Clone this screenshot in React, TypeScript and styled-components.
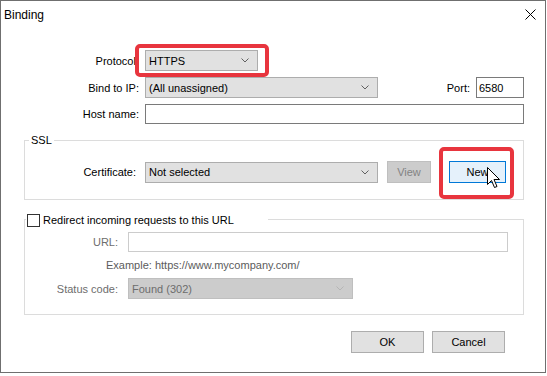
import React from "react";
import styled, { createGlobalStyle, css } from "styled-components";

const GlobalStyle = createGlobalStyle`
    body {
        margin: 0;
        background: #ffffff;
        font-family: "Segoe UI", "Liberation Sans", Arial, sans-serif;
        font-size: 11px;
        color: #000000;
    }
`;

const Window = styled.div`
    box-sizing: border-box;
    width: 546px;
    height: 373px;
    border: 1px solid #6f6f6f;
    background: #ffffff;
    display: flex;
    flex-direction: column;
`;

const TitleBar = styled.div`
    height: 27px;
    display: flex;
    align-items: center;
    justify-content: space-between;
    padding: 0 9px 0 3px;
    font-size: 12px;
`;

const Body = styled.div`
    display: flex;
    flex-direction: column;
    padding: 0 21px 0 23px;
`;

const TopForm = styled.div`
    display: flex;
    flex-direction: column;
    gap: 6px;
    margin-top: 22px;
`;

const Row = styled.div<{ $gap?: number }>`
    display: flex;
    align-items: center;
    gap: ${(p) => p.$gap ?? 6}px;
`;

const Label = styled.span<{ $width: number; $disabled?: boolean }>`
    width: ${(p) => p.$width}px;
    flex: none;
    text-align: right;
    white-space: nowrap;
    color: ${(p) => (p.$disabled ? "#6d6d6d" : "#000000")};
`;

const Spacer = styled.div`
    flex: 1;
`;

// red annotation frame drawn over a control
const Highlight = styled.div`
    position: relative;
    display: flex;

    &::after {
        content: "";
        position: absolute;
        top: -6px;
        bottom: -6px;
        left: -10px;
        right: -11px;
        border: 4px solid #e8353e;
        border-radius: 5px;
        pointer-events: none;
    }
`;

const ComboBox = styled.div<{ $width: number; $height?: number; $disabled?: boolean }>`
    box-sizing: border-box;
    width: ${(p) => p.$width}px;
    height: ${(p) => p.$height ?? 21}px;
    display: flex;
    align-items: center;
    justify-content: space-between;
    padding: 0 8px 0 3px;
    background: #e1e1e1;
    border: 1px solid #adadad;
    color: #000000;
    ${(p) =>
        p.$disabled &&
        css`
            background: #cccccc;
            border-color: #bfbfbf;
            color: #6d6d6d;
        `}
`;

const TextBox = styled.div<{ $width?: number; $height?: number; $disabled?: boolean }>`
    box-sizing: border-box;
    ${(p) => (p.$width ? `width: ${p.$width}px; flex: none;` : "flex: 1;")}
    height: ${(p) => p.$height ?? 21}px;
    display: flex;
    align-items: center;
    padding: 0 2px;
    background: #ffffff;
    border: 1px solid ${(p) => (p.$disabled ? "#cccccc" : "#7a7a7a")};
`;

const Group = styled.fieldset<{ $top: number; $padTop: number; $padBottom: number }>`
    margin: ${(p) => p.$top}px 0 0 0;
    padding: ${(p) => p.$padTop}px 0 ${(p) => p.$padBottom}px 0;
    min-width: 0;
    border: 1px solid #dcdcdc;
`;

const Legend = styled.legend`
    margin-left: 4px;
    padding: 0 2px;
    line-height: 13px;
`;

const CheckLegend = styled.legend`
    display: flex;
    align-items: center;
    gap: 3px;
    margin-left: 1px;
    padding: 3px 34px 0 1px;
    line-height: 13px;
`;

const CheckBox = styled.span`
    box-sizing: border-box;
    width: 13px;
    height: 13px;
    border: 1px solid #333333;
    background: #ffffff;
`;

const GroupBody = styled.div`
    display: flex;
    flex-direction: column;
`;

const Hint = styled.div`
    padding-left: 81px;
    margin: 7px 0 6px;
    line-height: 13px;
    color: #5c5c5c;
`;

const Button = styled.div<{ $width: number; $variant?: "default" | "disabled" | "hot" }>`
    box-sizing: border-box;
    width: ${(p) => p.$width}px;
    height: 22px;
    display: flex;
    align-items: center;
    justify-content: center;
    background: #e1e1e1;
    border: 1px solid #adadad;
    ${(p) =>
        p.$variant === "disabled" &&
        css`
            background: #cccccc;
            border-color: #bfbfbf;
            color: #838383;
        `}
    ${(p) =>
        p.$variant === "hot" &&
        css`
            background: #e5f1fb;
            border-color: #0078d7;
        `}
`;

const HotSpot = styled(Highlight)`
    margin-left: 9px;

    &::after {
        top: -14px;
        bottom: -16px;
        left: -10px;
        right: -8px;
    }
`;

const Cursor = styled.svg`
    position: absolute;
    left: 38px;
    top: 6px;
    z-index: 1;
`;

const Footer = styled.div`
    display: flex;
    justify-content: flex-end;
    gap: 8px;
    margin: 16px 19px 0 0;
`;

function Chevron({ disabled }: { disabled?: boolean }) {
    return (
        <svg width="8" height="5" viewBox="0 0 8 5">
            <path d="M0.5 0.5 L4 4 L7.5 0.5" fill="none" stroke={disabled ? "#b5b5b5" : "#606060"} strokeWidth="1" />
        </svg>
    );
}

function Combo(props: { width: number; value: string; disabled?: boolean; height?: number }) {
    return (
        <ComboBox $width={props.width} $height={props.height} $disabled={props.disabled}>
            <span>{props.value}</span>
            <Chevron disabled={props.disabled} />
        </ComboBox>
    );
}

export default function App() {
    return (
        <>
            <GlobalStyle />
            <Window>
                <TitleBar>
                    <span>Binding</span>
                    <svg width="11" height="11" viewBox="0 0 11 11">
                        <path d="M0.5 0.5 L10.5 10.5 M10.5 0.5 L0.5 10.5" stroke="#000" strokeWidth="1" />
                    </svg>
                </TitleBar>
                <Body>
                    <TopForm>
                        <Row>
                            <Label $width={115}>Protocol:</Label>
                            <Highlight>
                                <Combo width={113} value="HTTPS" />
                            </Highlight>
                        </Row>
                        <Row>
                            <Label $width={115}>Bind to IP:</Label>
                            <Combo width={233} value="(All unassigned)" />
                            <Spacer />
                            <Label $width={30}>Port:</Label>
                            <TextBox $width={48}>6580</TextBox>
                        </Row>
                        <Row>
                            <Label $width={115}>Host name:</Label>
                            <TextBox $height={20} />
                        </Row>
                    </TopForm>

                    <Group $top={10} $padTop={14} $padBottom={16}>
                        <Legend>SSL</Legend>
                        <Row $gap={9}>
                            <Label $width={111}>Certificate:</Label>
                            <Combo width={233} value="Not selected" />
                            <Button $width={44} $variant="disabled">
                                View
                            </Button>
                            <HotSpot>
                                <Button $width={57} $variant="hot">
                                    New
                                </Button>
                                <Cursor width="14" height="22" viewBox="0 0 14 22">
                                    <path
                                        d="M0.5 0.5 L0.5 17.5 L4.5 13.5 L7.5 20.5 L10 19.5 L7 12.5 L12.5 12.5 Z"
                                        fill="#ffffff"
                                        stroke="#000000"
                                        strokeWidth="1"
                                        strokeLinejoin="miter"
                                    />
                                </Cursor>
                            </HotSpot>
                        </Row>
                    </Group>

                    <Group $top={11} $padTop={5} $padBottom={15}>
                        <CheckLegend>
                            <CheckBox />
                            <span>Redirect incoming requests to this URL</span>
                        </CheckLegend>
                        <GroupBody>
                            <Row $gap={10}>
                                <Label $width={93} $disabled>
                                    URL:
                                </Label>
                                <TextBox $width={380} $height={20} $disabled />
                            </Row>
                            <Hint>Example: https://www.mycompany.com/</Hint>
                            <Row $gap={10}>
                                <Label $width={93} $disabled>
                                    Status code:
                                </Label>
                                <Combo width={225} value="Found (302)" disabled />
                            </Row>
                        </GroupBody>
                    </Group>

                    <Footer>
                        <Button $width={73}>OK</Button>
                        <Button $width={73}>Cancel</Button>
                    </Footer>
                </Body>
            </Window>
        </>
    );
}
